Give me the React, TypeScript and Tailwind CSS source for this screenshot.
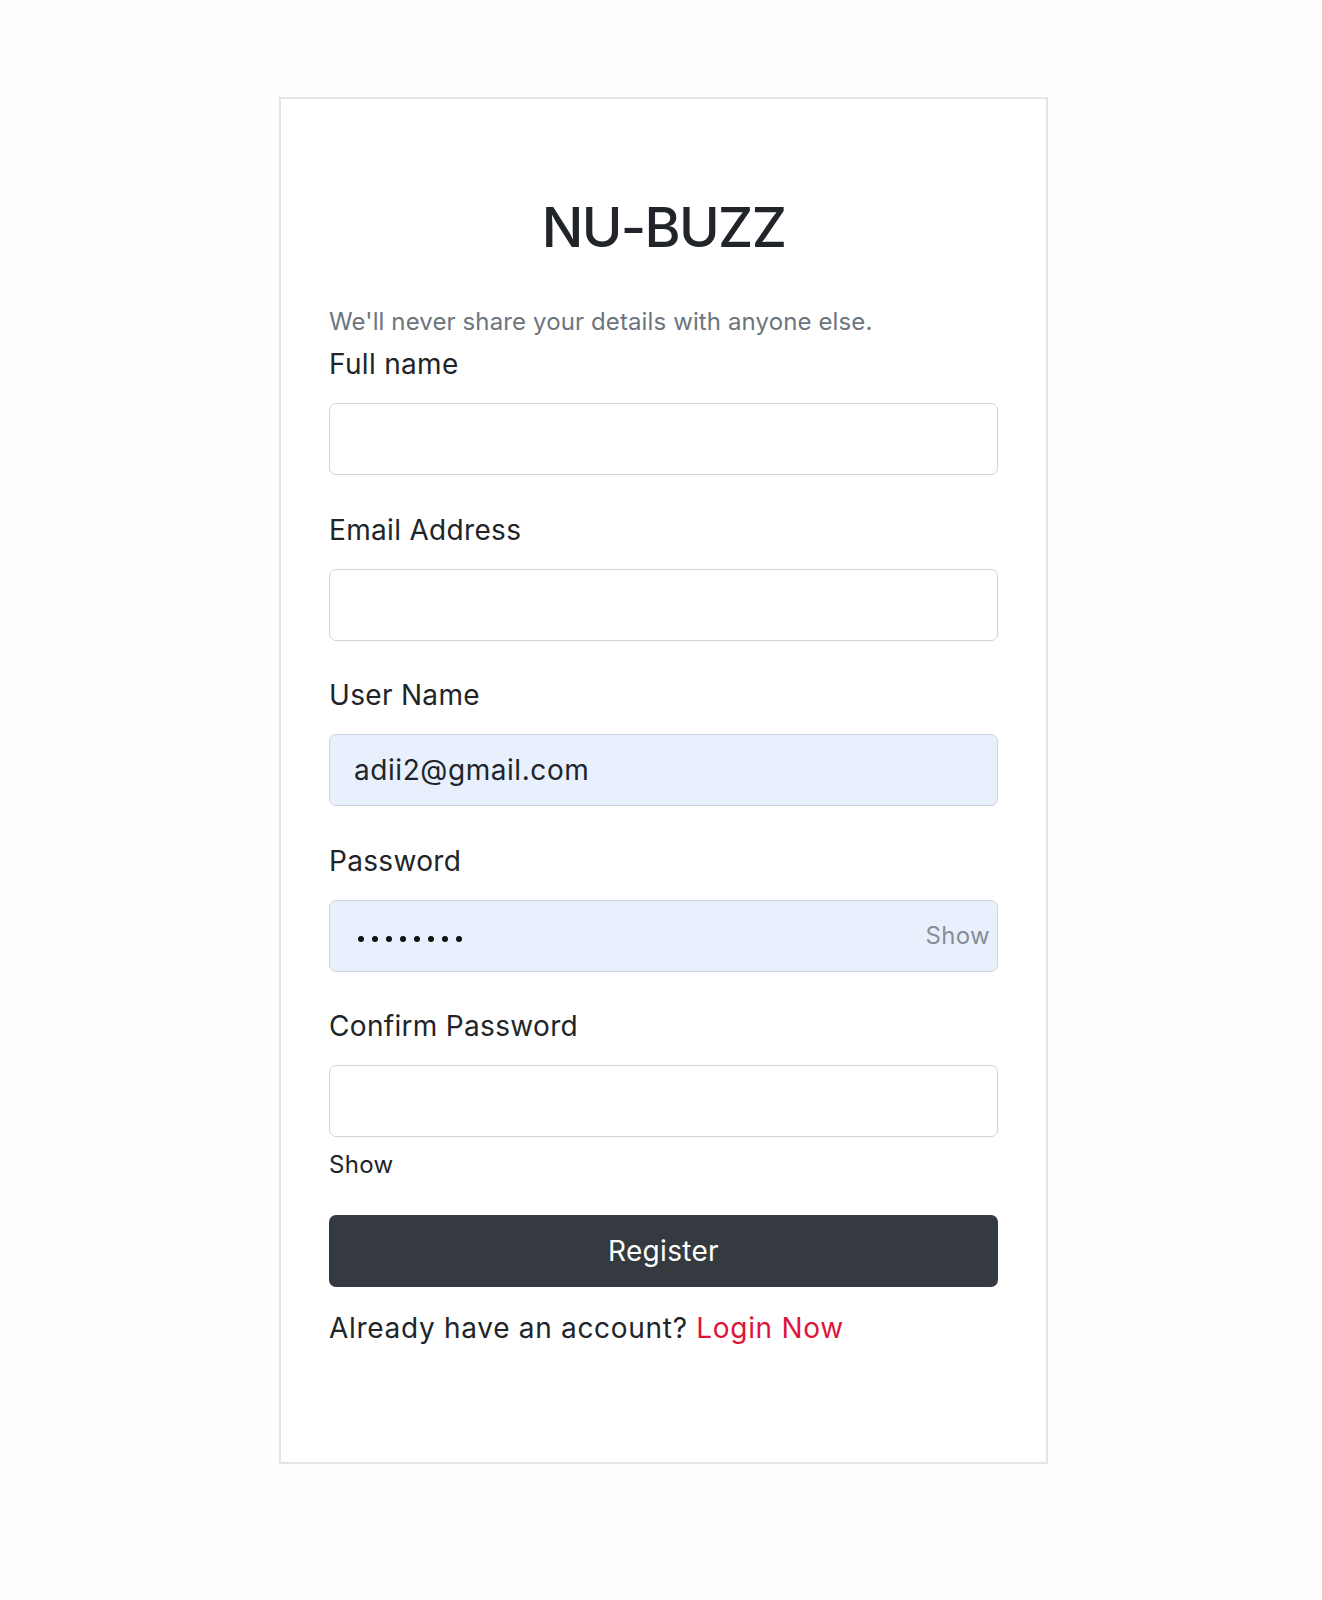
import { useState } from "react";

type Field = {
  id: string;
  label: string;
  value?: string;
  secret?: boolean;
};

const FIELDS: Field[] = [
  { id: "fullName", label: "Full name" },
  { id: "email", label: "Email Address" },
  { id: "userName", label: "User Name", value: "adii2@gmail.com" },
  { id: "password", label: "Password", value: "password", secret: true },
];

export default function App() {
  const [showPassword, setShowPassword] = useState(false);
  const [showConfirm, setShowConfirm] = useState(false);

  return (
    <main className="min-h-screen bg-[#fefefe] pt-[97px] font-['Inter','Noto_Sans',sans-serif] text-[#212529]">
      <section className="ml-[279px] w-[769px] border-2 border-[#e4e4e4] bg-white px-[48px] pb-[113px] pt-[95px]">
        <h1 className="text-center text-[55px] font-medium leading-[1.22] tracking-[-0.03em]">
          NU-BUZZ
        </h1>

        <p className="mt-[43px] text-[24px] leading-[36px] tracking-[0.005em] text-[#6c757d]">
          We'll never share your details with anyone else.
        </p>

        <form
          className="mt-[3px] tracking-[0.02em]"
          onSubmit={(e) => e.preventDefault()}
        >
          {FIELDS.map((field) => (
            <div key={field.id} className="mb-[33.5px]">
              <label
                htmlFor={field.id}
                className="mb-[18px] block text-[28px] leading-[42px]"
              >
                {field.label}
              </label>
              <div className="relative">
                {field.secret ? (
                  <div
                    id={field.id}
                    className="flex h-[72px] w-full items-center rounded-[7px] border border-[#ced4da] bg-[#e8f0fe] pl-[28px] pt-[6px]"
                  >
                    {showPassword ? (
                      <span className="text-[28px]">{field.value}</span>
                    ) : (
                      <span className="flex gap-[8px]">
                        {Array.from({ length: 8 }).map((_, i) => (
                          <span
                            key={i}
                            className="h-[6px] w-[6px] rounded-full bg-[#111]"
                          />
                        ))}
                      </span>
                    )}
                  </div>
                ) : (
                  <input
                    id={field.id}
                    readOnly
                    value={field.value ?? ""}
                    className={`block h-[72px] w-full rounded-[7px] border border-[#ced4da] px-[24px] text-[28px] tracking-[0.02em] text-[#212529] outline-none ${field.value ? "bg-[#e8f0fe]" : "bg-white"}`}
                  />
                )}
                {field.secret ? (
                  <button
                    type="button"
                    onClick={() => setShowPassword((v) => !v)}
                    className="absolute right-[8px] top-1/2 -translate-y-1/2 text-[24px] text-[#868e96]"
                  >
                    Show
                  </button>
                ) : null}
              </div>
            </div>
          ))}

          <div>
            <label
              htmlFor="confirm"
              className="mb-[18px] block text-[28px] leading-[42px]"
            >
              Confirm Password
            </label>
            <input
              id="confirm"
              readOnly
              type={showConfirm ? "text" : "password"}
              value=""
              className="block h-[72px] w-full rounded-[7px] border border-[#ced4da] bg-white px-[24px] text-[28px] outline-none"
            />
            <button
              type="button"
              onClick={() => setShowConfirm((v) => !v)}
              className="mt-[10px] block text-[24px] leading-[36px] text-[#212529]"
            >
              Show
            </button>
          </div>

          <button
            type="submit"
            className="mt-[32px] block h-[72px] w-full rounded-[7px] bg-[#343a40] text-[28px] text-white"
          >
            Register
          </button>
        </form>

        <p className="mt-[20px] text-[28px] leading-[42px] tracking-[0.025em]">
          Already have an account?{" "}
          <a href="#" className="text-[#dc143c]">
            Login Now
          </a>
        </p>
      </section>
    </main>
  );
}
